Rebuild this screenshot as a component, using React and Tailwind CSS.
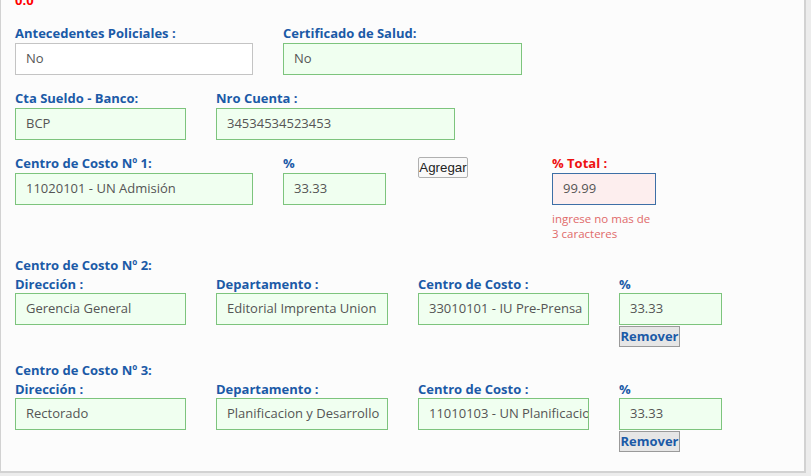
import React from "react";

const Label = ({ children, className = "" }) => (
  <div className={`text-[13px] leading-[18px] font-bold text-[#1b5aa7] whitespace-nowrap ${className}`}>{children}</div>
);

const Input = ({ value, w, plain = false, className = "" }) => (
  <div
    className={`h-[32px] border flex items-center pl-[10px] overflow-hidden whitespace-nowrap text-[13px] text-[#555] ${
      plain ? "bg-white border-[#c4c4c4]" : "bg-[#f0fff0] border-[#7dc47d]"
    } ${w} ${className}`}
  >
    {value}
  </div>
);

const Field = ({ label, value, w, plain, mt = "mt-[1px]" }) => (
  <div>
    <Label>{label}</Label>
    <Input value={value} w={w} plain={plain} className={mt} />
  </div>
);

const RemoveBtn = () => (
  <button className="block mt-[1px] h-[21px] w-[61px] bg-[#e6e6e6] border border-[#9a9a9a] text-[13px] leading-[17px] font-bold text-[#1b5aa7] font-['Open_Sans'] px-0">
    Remover
  </button>
);

const Section = ({ n, dir, dep, cc, pct }) => (
  <div>
    <Label>Centro de Costo Nº {n}:</Label>
    <div className="flex gap-[30px] mt-[1px]">
      <Field label="Dirección :" value={dir} w="w-[171px]" mt="mt-0" />
      <Field label="Departamento :" value={dep} w="w-[172px]" mt="mt-0" />
      <Field label="Centro de Costo :" value={cc} w="w-[171px]" mt="mt-0" />
      <div>
        <Label>%</Label>
        <Input value={pct} w="w-[103px]" />
        <RemoveBtn />
      </div>
    </div>
  </div>
);

export default function App() {
  return (
    <div className="w-[811px] h-[476px] bg-[#ececec] overflow-hidden font-['Open_Sans',sans-serif]">
      <div className="w-[806px] h-[473px] bg-[#fcfcfc] border-l border-r-2 border-b-2 border-[#d2d2d2] overflow-hidden pl-[14px]">
        <div className="mt-[-9px] text-[13px] leading-[18px] font-bold text-[#ff0000]">0.0</div>

        <div className="flex gap-[30px] mt-[15px]">
          <Field label="Antecedentes Policiales :" value="No" w="w-[238px]" plain />
          <Field label="Certificado de Salud:" value="No" w="w-[239px]" />
        </div>

        <div className="flex gap-[30px] mt-[14px]">
          <Field label="Cta Sueldo - Banco:" value="BCP" w="w-[171px]" />
          <Field label="Nro Cuenta :" value="34534534523453" w="w-[239px]" />
        </div>

        <div className="flex mt-[14px]">
          <Field label="Centro de Costo Nº 1:" value="11020101 - UN Admisión" w="w-[238px]" />
          <div className="ml-[30px]">
            <Label>%</Label>
            <Input value="33.33" w="w-[103px]" className="mt-[1px]" />
          </div>
          <div className="ml-[32px] pt-[3px]">
            <button className="block h-[21px] w-[50px] bg-[#f9f9f9] border border-[#b0b0b0] rounded-[2px] font-['Liberation_Sans',sans-serif] text-[13.3px] leading-[17px] text-[#222] px-0">
              Agregar
            </button>
          </div>
          <div className="ml-[84px]">
            <Label className="!text-[#ee1111]">% Total :</Label>
            <div className="mt-[1px] h-[32px] w-[104px] border border-[#3d6fa6] bg-[#fdeeee] flex items-center pl-[10px] text-[13px] text-[#555]">
              99.99
            </div>
            <div className="mt-[6px] w-[104px] text-[11.5px] leading-[15px] text-[#e06a6a]">
              ingrese no mas de 3 caracteres
            </div>
          </div>
        </div>

        <div className="mt-[15px]">
          <Section n={2} dir="Gerencia General" dep="Editorial Imprenta Union" cc="33010101 - IU Pre-Prensa" pct="33.33" />
        </div>
        <div className="mt-[14px]">
          <Section n={3} dir="Rectorado" dep="Planificacion y Desarrollo" cc="11010103 - UN Planificacion" pct="33.33" />
        </div>
      </div>
    </div>
  );
}
